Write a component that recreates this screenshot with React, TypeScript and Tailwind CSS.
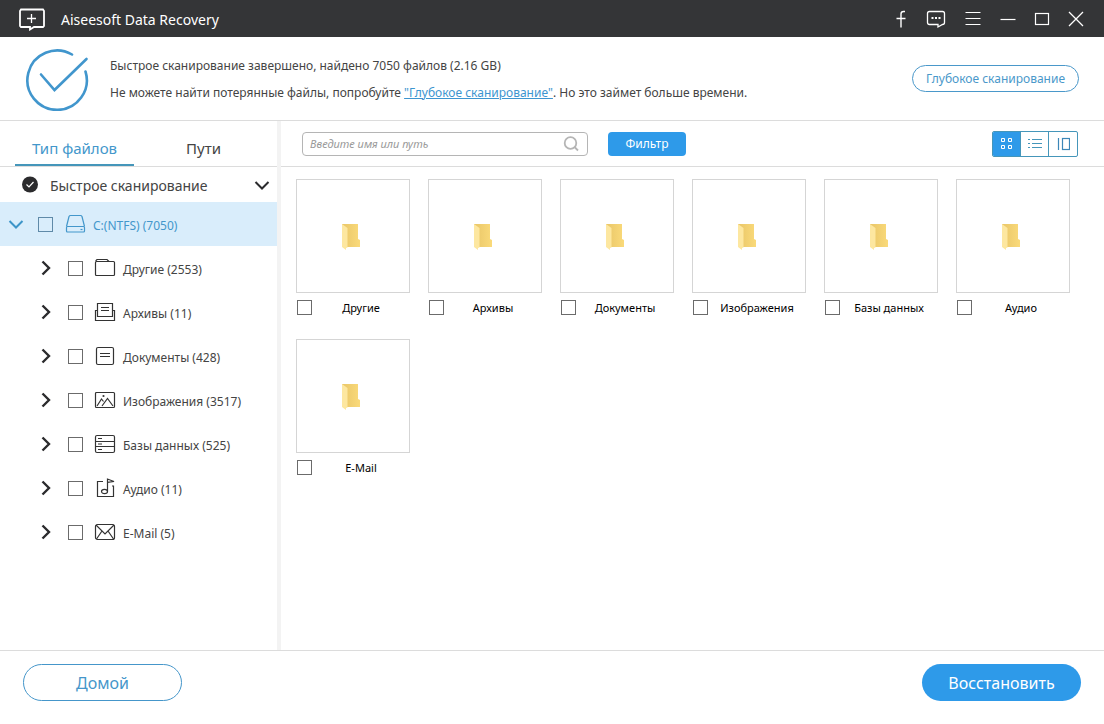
import { useState } from "react";
import type { ReactNode } from "react";

const FONT = "font-['Noto_Sans','Open_Sans',sans-serif]";

const FolderIcon = () => (
  <svg width="22" height="20" viewBox="0 0 22 20" fill="none" stroke="#333" strokeWidth="1.2">
    <rect x="1.5" y="3.5" width="19" height="14" rx="1" />
    <path d="M2 3.5v-1l1-1h10l2 2" />
  </svg>
)

const ArchiveIcon = () => (
  <svg width="22" height="20" viewBox="0 0 22 20" fill="none" stroke="#333" strokeWidth="1.2">
    <path d="M3.5 8.5h-2v10h19v-10h-2" />
    <path d="M3.5 14.5v-13h15v13z" />
    <path d="M7 5.5h8M7 8.5h8" />
  </svg>
)

const DocumentIcon = () => (
  <svg width="22" height="20" viewBox="0 0 22 20" fill="none" stroke="#333" strokeWidth="1.2">
    <rect x="2.5" y="1.5" width="17" height="17" rx="1.5" />
    <path d="M6 7.5h10M6 10.5h10" />
  </svg>
)

const ImageIcon = () => (
  <svg width="22" height="20" viewBox="0 0 22 20" fill="none" stroke="#333" strokeWidth="1.2">
    <rect x="1.5" y="2.5" width="19" height="15" rx="1" />
    <path d="M3 16l4.5-7 2 2.5M8 16l5.5-7.5L19 16" />
    <circle cx="9.5" cy="6" r="1.1" fill="#333" stroke="none" />
  </svg>
)

const DatabaseIcon = () => (
  <svg width="22" height="20" viewBox="0 0 22 20" fill="none" stroke="#333" strokeWidth="1.2">
    <rect x="1.5" y="1.5" width="19" height="17" rx="1.5" />
    <path d="M1.5 7.5h19M1.5 12.5h19M4 4.5h4M4 10h4M4 15.5h4" />
  </svg>
)

const AudioIcon = () => (
  <svg width="22" height="20" viewBox="0 0 22 20" fill="none" stroke="#333" strokeWidth="1.2">
    <path d="M9 3.5H3.5v15h16V8H18" />
    <ellipse cx="10.5" cy="13.5" rx="3" ry="2.2" />
    <path d="M13.5 13.5V1L20 3.5l-6.5.8" />
  </svg>
)

const MailIcon = () => (
  <svg width="22" height="20" viewBox="0 0 22 20" fill="none" stroke="#333" strokeWidth="1.2">
    <rect x="1.5" y="2.5" width="19" height="15" rx="2" />
    <path d="M2 3l9 9 9-9M2.5 17L8 9M19.5 17L14 9" />
  </svg>
)

const categories = [
  { name: "Другие", count: 2553, icon: FolderIcon },
  { name: "Архивы", count: 11, icon: ArchiveIcon },
  { name: "Документы", count: 428, icon: DocumentIcon },
  { name: "Изображения", count: 3517, icon: ImageIcon },
  { name: "Базы данных", count: 525, icon: DatabaseIcon },
  { name: "Аудио", count: 11, icon: AudioIcon },
  { name: "E-Mail", count: 5, icon: MailIcon },
]

function Checkbox({ id, blue }: { id: string; blue?: boolean }) {
  return (
    <input
      id={id}
      type="checkbox"
      className={`size-[15px] shrink-0 appearance-none border checked:bg-[#2e9ae9] ${blue ? "border-[#5f8aa8]" : "border-[#6b6b6b]"}`}
    />
  )
}

function WindowButton({ label, children }: { label: string; children: ReactNode }) {
  return (
    <button type="button" aria-label={label} className="flex size-5 items-center justify-center">
      {children}
    </button>
  )
}

function TitleBar() {
  return (
    <header className="flex h-[37px] items-center bg-[#343537] px-[18px] text-white">
      <svg width="28" height="24" viewBox="0 0 28 24" fill="none" stroke="white" strokeWidth="1.8">
        <path d="M9 20H3l-1-1V4l1-1.500h22L26 4v15l-1 1h-9l-4 2.500V20H9" />
        <path d="M13.5 7v9M9 11.500h9" strokeWidth="1.3" />
      </svg>
      <h1 className="ml-[15px] pt-0.5 text-sm">Aiseesoft Data Recovery</h1>
      <div className="ml-auto flex items-center gap-[15px]">
        <WindowButton label="Facebook">
          <svg width="20" height="20" viewBox="0 0 20 20" fill="none" stroke="white" strokeWidth="1.4">
            <path d="M14 2.5h-1.5Q10 2.5 10 5v13.500M5.500 9.500h9" />
          </svg>
        </WindowButton>
        <WindowButton label="Сообщение">
          <svg width="20" height="20" viewBox="0 0 20 20" fill="none" stroke="white" strokeWidth="1.3">
            <path d="M11 15.5H3.5q-2 0-2-2v-9q0-2 2-2h13q2 0 2 2v9q0 2-2 2L12 18v-2.500z" />
            <path d="M5.5 9h2M9 9h2M12.5 9h2" strokeWidth="2" />
          </svg>
        </WindowButton>
        <WindowButton label="Меню">
          <svg width="20" height="20" viewBox="0 0 20 20" stroke="white" strokeWidth="1.2">
            <path d="M4.5 3.5h15M4.5 9.5h15M4.5 15.5h15" />
          </svg>
        </WindowButton>
        <WindowButton label="Свернуть">
          <svg width="20" height="20" viewBox="0 0 20 20" stroke="white" strokeWidth="1.2">
            <path d="M4.5 10.5h15" />
          </svg>
        </WindowButton>
        <WindowButton label="Развернуть">
          <svg width="20" height="20" viewBox="0 0 20 20" fill="none" stroke="white" strokeWidth="1.2">
            <rect x="4.5" y="4.5" width="13" height="11" />
          </svg>
        </WindowButton>
        <WindowButton label="Закрыть">
          <svg width="20" height="20" viewBox="0 0 20 20" stroke="white" strokeWidth="1.3">
            <path d="M3 3l14 14M17 3L3 17" />
          </svg>
        </WindowButton>
      </div>
    </header>
  )
}

function Banner() {
  return (
    <section className="flex items-center border-b border-[#dcdcdc] py-[9px] pr-[25px] pl-6">
      <svg width="66" height="65" viewBox="0 0 66 65" fill="none" stroke="#4196cd" strokeWidth="2.6" strokeLinecap="round">
        <path d="M48 8.500A29.700 29.700 0 1 0 61.500 25.500" />
        <path d="M17 28.500l13.500 15.500L62.500 13" />
      </svg>
      <div className="ml-5 text-xs leading-[27px] text-[#444]">
        <p>Быстрое сканирование завершено, найдено 7050 файлов (2.16 GB)</p>
        <p>
          Не можете найти потерянные файлы, попробуйте{" "}
          <a href="#deep" className="text-[#3d95d0] underline">"Глубокое сканирование"</a>. Но это займет больше времени.
        </p>
      </div>
      <button type="button" className="ml-auto h-[27px] w-[167px] rounded-full border border-[#4a98ca] text-xs text-[#4a98ca]">
        Глубокое сканирование
      </button>
    </section>
  )
}

function Sidebar() {
  const [tab, setTab] = useState("type")

  return (
    <aside className="w-[281px] shrink-0 border-r-4 border-[#f3f3f3]">
      <div className="flex h-[46px] items-stretch border-b border-[#dcdcdc] pl-[15px] text-[15px]">
        <button
          type="button"
          onClick={() => setTab("type")}
          className={`w-[119px] border-b-2 pt-3 ${tab === "type" ? "border-[#4596ba] text-[#4397cb]" : "border-transparent text-[#444]"}`}
        >
          Тип файлов
        </button>
        <button
          type="button"
          onClick={() => setTab("path")}
          className={`ml-[10px] w-[119px] border-b-2 pt-3 ${tab === "path" ? "border-[#4596ba] text-[#4397cb]" : "border-transparent text-[#444]"}`}
        >
          Пути
        </button>
      </div>

      <button type="button" className="flex h-[35px] w-full items-center pr-[7px] pl-[22px] text-sm text-[#444]">
        <svg width="16" height="18" viewBox="0 0 16 18" fill="none">
          <circle cx="8" cy="8.5" r="8" fill="#2b2b2d" />
          <path d="M4.5 8.500L7 11l4.500-5" stroke="white" strokeWidth="1.2" />
        </svg>
        <span className="ml-3 pt-0.5">Быстрое сканирование</span>
        <svg className="ml-auto" width="16" height="16" viewBox="0 0 16 16" fill="none" stroke="#2b2b2d" strokeWidth="2">
          <path d="M1.5 5L8 11.500 14.500 5" />
        </svg>
      </button>

      <div className="flex h-11 items-center bg-[#d9edfb] pl-2 text-xs text-[#4397cb]">
        <button type="button" aria-label="Свернуть диск" className="mr-[14px]">
          <svg width="16" height="16" viewBox="0 0 16 16" fill="none" stroke="#3d95c8" strokeWidth="2">
            <path d="M1.5 5L8 11.500 14.500 5" />
          </svg>
        </button>
        <Checkbox id="disk" blue />
        <label htmlFor="disk" className="ml-3 flex items-center gap-[7px]">
          <svg width="21" height="20" viewBox="0 0 21 20" fill="none" stroke="#4397cb" strokeWidth="1.2">
            <path d="M1.500 12.500L4 2.500q.5-1 1.500-1h10q1 0 1.500 1l2.500 10" />
            <rect x="1.5" y="12.5" width="18" height="5.5" rx="1" />
            <path d="M15.500 15.500h2" />
          </svg>
          <span className="pt-[3px]">C:(NTFS) (7050)</span>
        </label>
      </div>

      <ul>
        {categories.map(({ name, count, icon: Icon }) => (
          <li key={name} className="flex h-11 items-center pl-[38px] text-xs text-[#444]">
            <button type="button" aria-label={"Развернуть " + name} className="mr-[14px]">
              <svg width="16" height="16" viewBox="0 0 16 16" fill="none" stroke="#2b2b2d" strokeWidth="2.4">
                <path d="M4.500 1.500L11 8l-6.500 6.500" />
              </svg>
            </button>
            <Checkbox id={"tree-" + name} />
            <label htmlFor={"tree-" + name} className="ml-[11px] flex items-center gap-[7px]">
              <Icon />
              <span className="pt-[3px]">{name} ({count})</span>
            </label>
          </li>
        ))}
      </ul>
    </aside>
  )
}

function Toolbar() {
  return (
    <div className="flex h-[46px] items-center border-b border-[#dcdcdc] pr-[26px] pl-[21px]">
      <div className="flex h-6 w-[286px] items-center rounded border border-[#b5b5b5] px-[7px]">
        <input
          type="text"
          aria-label="Поиск"
          placeholder="Введите имя или путь"
          className="min-w-0 flex-1 pt-0.5 text-[11px] italic outline-none placeholder:text-[#999]"
        />
        <svg width="17" height="17" viewBox="0 0 17 17" fill="none" stroke="#b5b5b5" strokeWidth="1.8">
          <circle cx="7.5" cy="8" r="5.8" />
          <path d="M11.5 12l3.500 3.500" />
        </svg>
      </div>
      <button type="button" className="ml-5 h-6 w-[78px] rounded bg-[#2e9ae9] text-xs text-white">Фильтр</button>
      <div className="ml-auto flex h-[26px] divide-x divide-[#4596ba] overflow-hidden rounded-xs border border-[#4596ba]">
        <button type="button" aria-label="Плитка" className="flex w-7 items-center justify-center bg-[#2e9ae9]">
          <svg width="14" height="14" viewBox="0 0 14 14" fill="none" stroke="white">
            <path d="M1.500 1.500h3v3h-3zM8.500 1.500h3v3h-3zM1.500 8.500h3v3h-3zM8.500 8.500h3v3h-3z" />
          </svg>
        </button>
        <button type="button" aria-label="Список" className="flex w-7 items-center justify-center">
          <svg width="16" height="14" viewBox="0 0 16 14" stroke="#4596ba">
            <path d="M5 2.500h10M5 6.500h10M5 10.500h10M1 2.500h2M1 6.500h2M1 10.500h2" />
          </svg>
        </button>
        <button type="button" aria-label="Просмотр" className="flex w-7 items-center justify-center">
          <svg width="14" height="14" viewBox="0 0 14 14" fill="none" stroke="#3c87b8" strokeWidth="1.2">
            <path d="M2.500 1v12" />
            <rect x="6.5" y="1.5" width="7" height="11" />
          </svg>
        </button>
      </div>
    </div>
  )
}

function FolderCard({ name }: { name: string }) {
  return (
    <div>
      <div className="flex h-[114px] items-center justify-center border border-[#d5d5d5] pr-1">
        <svg width="20" height="28" viewBox="0 0 20 28">
          <defs>
            <linearGradient id="back" x1="0" x2="1">
              <stop offset="0" stopColor="#e9c668" />
              <stop offset="1" stopColor="#fada7a" />
            </linearGradient>
          </defs>
          <path d="M1 2h16v15l2 1v7H5l-4-2z" fill="url(#back)" />
          <path d="M1 2l5.500 4v19.500L5 26v2l-4-3z" fill="#fde7a0" />
        </svg>
      </div>
      <div className="mt-1 flex h-[21px] items-center pl-px">
        <Checkbox id={"card-" + name} />
        <label htmlFor={"card-" + name} className="flex-1 pt-0.5 text-center text-[11px] whitespace-nowrap text-black">{name}</label>
      </div>
    </div>
  )
}

export default function App() {
  return (
    <div className={`flex min-h-screen flex-col bg-white ${FONT}`}>
      <TitleBar />
      <Banner />

      <main className="flex flex-1">
        <Sidebar />
        <section className="min-w-0 flex-1">
          <Toolbar />
          <div className="grid grid-cols-[repeat(auto-fill,114px)] gap-x-[18px] gap-y-[21px] px-[15px] pt-3">
            {categories.map((c) => (
              <FolderCard key={c.name} name={c.name} />
            ))}
          </div>
        </section>
      </main>

      <footer className="flex items-center justify-between border-t border-[#dcdcdc] px-[23px] pt-[13px] pb-[23px]">
        <button type="button" className="h-[37px] w-[159px] rounded-full border border-[#4596ca] text-base text-[#4596ca]">Домой</button>
        <button type="button" className="h-[37px] w-[159px] rounded-full bg-[#2e9ae9] text-base text-white">Восстановить</button>
      </footer>
    </div>
  )
}
